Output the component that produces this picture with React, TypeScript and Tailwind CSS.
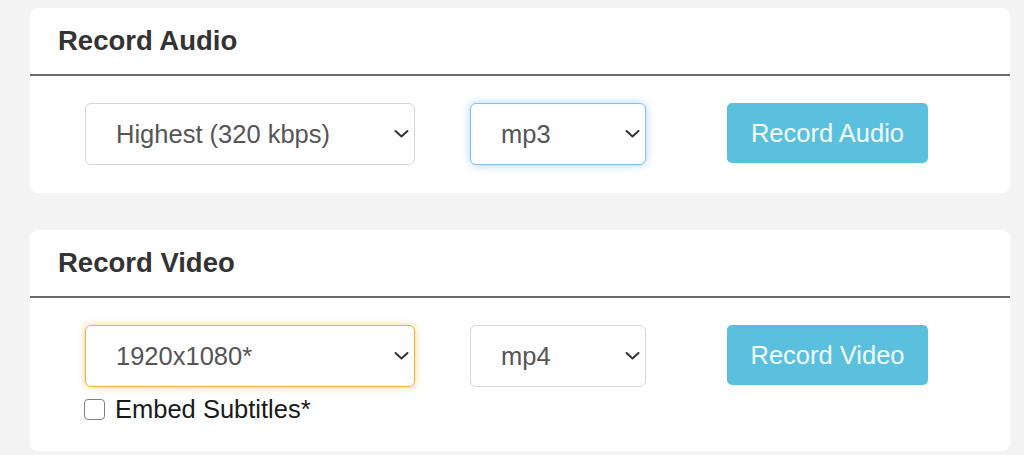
import React from "react";

function Chevron() {
  return (
    <svg
      className="pointer-events-none absolute right-[6px] top-1/2 -translate-y-1/2"
      width="15"
      height="9"
      viewBox="0 0 15 9"
      fill="none"
    >
      <path d="M1.5 1.5 L7.5 7 L13.5 1.5" stroke="#333" strokeWidth="2" strokeLinecap="round" strokeLinejoin="round" />
    </svg>
  );
}

function Select({
  value,
  options,
  width,
  variant,
}: {
  value: string;
  options: string[];
  width: string;
  variant: "plain" | "blue" | "orange";
}) {
  const ring =
    variant === "blue"
      ? "border-[#86bdf0] shadow-[0_0_8px_rgba(102,175,233,0.55)]"
      : variant === "orange"
      ? "border-[#f6b042] shadow-[0_0_7px_rgba(245,166,35,0.55)]"
      : "border-[#d6d6d6]";
  return (
    <div className={`relative ${width}`}>
      <select
        defaultValue={value}
        className={`h-[62px] w-full appearance-none rounded-[6px] border-[1.5px] bg-white pl-[30px] pr-8 text-[25.5px] text-[#555] outline-none ${ring}`}
        style={{ fontFamily: '"Liberation Sans", Arial, sans-serif' }}
      >
        {options.map((o) => (
          <option key={o} value={o}>
            {o}
          </option>
        ))}
      </select>
      <Chevron />
    </div>
  );
}

function Card({ title, children }: { title: string; children: React.ReactNode }) {
  return (
    <div className="rounded-[8px] bg-white">
      <div className="flex h-[68px] items-center border-b-2 border-[#6a6a6a] pl-[28px]">
        <h2 className="text-[27.5px] font-bold leading-none text-[#333]">{title}</h2>
      </div>
      {children}
    </div>
  );
}

export default function App() {
  return (
    <div
      className="min-h-[455px] w-full overflow-hidden bg-[#f3f3f3] pl-[30px] pr-[14px] pt-[8px]"
      style={{ fontFamily: '"Liberation Sans", Arial, sans-serif' }}
    >
      <Card title="Record Audio">
        <div className="flex items-start pl-[55px] pt-[27px] pb-[28px]">
          <Select value="Highest (320 kbps)" options={["Highest (320 kbps)", "High (256 kbps)", "Medium (192 kbps)", "Low (128 kbps)"]} width="w-[330px]" variant="plain" />
          <div className="ml-[55px]">
            <Select value="mp3" options={["mp3", "wav", "ogg"]} width="w-[176px]" variant="blue" />
          </div>
          <button className="ml-[81px] h-[60px] w-[201px] rounded-[5px] bg-[#5bc0de] text-[25.5px] text-[#f2fbfe]">
            Record Audio
          </button>
        </div>
      </Card>

      <div className="mt-[37px]">
        <Card title="Record Video">
          <div className="flex items-start pl-[55px] pt-[27px] pb-[28px]">
            <div className="flex flex-col">
              <Select value="1920x1080*" options={["1920x1080*", "1280x720", "854x480", "640x360"]} width="w-[330px]" variant="orange" />
              <label className="ml-[-1px] mt-[8px] flex items-center gap-[10px] text-[25.5px] leading-[28px] text-[#1a1a1a]">
                <input
                  type="checkbox"
                  className="h-[21px] w-[21px] appearance-none rounded-[4px] border-[1.5px] border-[#808080] bg-white"
                />
                <span>Embed Subtitles*</span>
              </label>
            </div>
            <div className="ml-[55px]">
              <Select value="mp4" options={["mp4", "webm", "mkv"]} width="w-[176px]" variant="plain" />
            </div>
            <button className="ml-[81px] h-[60px] w-[201px] rounded-[5px] bg-[#5bc0de] text-[25.5px] text-[#f2fbfe]">
              Record Video
            </button>
          </div>
        </Card>
      </div>
    </div>
  );
}
